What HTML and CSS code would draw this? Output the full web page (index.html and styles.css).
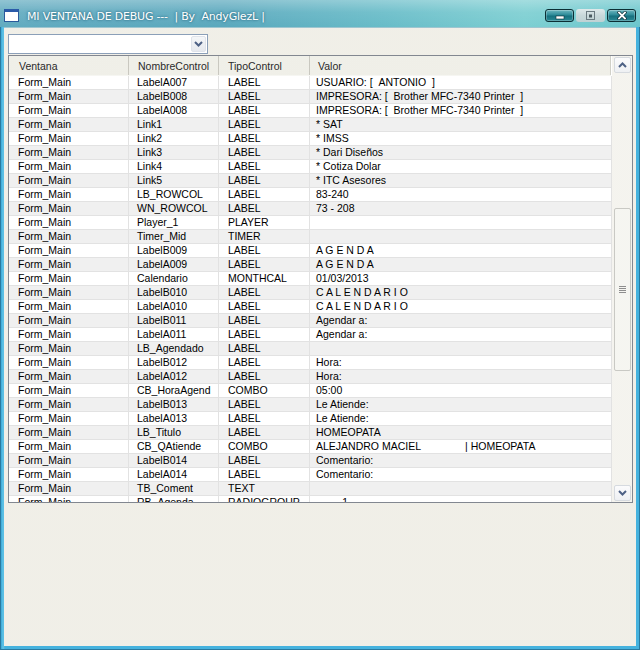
FILE: index.html
```html
<!DOCTYPE html>
<html>
<head>
<meta charset="utf-8">
<link rel="stylesheet" href="styles.css">
</head>
<body>
<div class="window">
  <div class="titlebar">
    <div class="appicon"></div>
    <div class="title">MI VENTANA DE DEBUG ---&nbsp;&nbsp;| By&nbsp;&nbsp;AndyGlezL |</div>
    <div class="tbtns">
      <div class="tbtn dark"><svg width="10" height="6" viewBox="0 0 10 6"><rect x="1" y="2" width="8" height="3" fill="#fff" stroke="#0b3038" stroke-width="0.6"/></svg></div>
      <div class="tbtn light"><svg width="9" height="9" viewBox="0 0 9 9"><rect x="0.5" y="0.5" width="8" height="8" fill="none" stroke="#6a7a80"/><rect x="3" y="3.5" width="3" height="3" fill="#4a5a60"/></svg></div>
      <div class="tbtn dark close"><svg width="10" height="9" viewBox="0 0 10 9"><path d="M2 1.5 L8 7.5 M8 1.5 L2 7.5" stroke="#0b3038" stroke-width="3.2" stroke-linecap="square"/><path d="M2 1.5 L8 7.5 M8 1.5 L2 7.5" stroke="#fff" stroke-width="1.8" stroke-linecap="square"/></svg></div>
    </div>
  </div>
  <div class="client">
    <div class="combo">
      <div class="combo-text"></div>
      <div class="combo-btn"><svg width="9" height="6" viewBox="0 0 9 6"><path d="M1 1 L4.5 4.5 L8 1" fill="none" stroke="#4d6185" stroke-width="2"/></svg></div>
    </div>
    <div class="listview">
      <div class="lv-main">
        <div class="lv-head">
          <div class="hc c1">Ventana</div>
          <div class="hc c2">NombreControl</div>
          <div class="hc c3">TipoControl</div>
          <div class="hc c4">Valor</div>
        </div>
        <div class="lv-body">
          <div class="row"><div>Form_Main</div><div>LabelA007</div><div>LABEL</div><div>USUARIO: [&nbsp;&nbsp;ANTONIO&nbsp;&nbsp;]</div></div>
          <div class="row"><div>Form_Main</div><div>LabelB008</div><div>LABEL</div><div>IMPRESORA: [&nbsp;&nbsp;Brother MFC-7340 Printer&nbsp;&nbsp;]</div></div>
          <div class="row"><div>Form_Main</div><div>LabelA008</div><div>LABEL</div><div>IMPRESORA: [&nbsp;&nbsp;Brother MFC-7340 Printer&nbsp;&nbsp;]</div></div>
          <div class="row"><div>Form_Main</div><div>Link1</div><div>LABEL</div><div>* SAT</div></div>
          <div class="row"><div>Form_Main</div><div>Link2</div><div>LABEL</div><div>* IMSS</div></div>
          <div class="row"><div>Form_Main</div><div>Link3</div><div>LABEL</div><div>* Dari Diseños</div></div>
          <div class="row"><div>Form_Main</div><div>Link4</div><div>LABEL</div><div>* Cotiza Dolar</div></div>
          <div class="row"><div>Form_Main</div><div>Link5</div><div>LABEL</div><div>* ITC Asesores</div></div>
          <div class="row"><div>Form_Main</div><div>LB_ROWCOL</div><div>LABEL</div><div>83-240</div></div>
          <div class="row"><div>Form_Main</div><div>WN_ROWCOL</div><div>LABEL</div><div>73 - 208</div></div>
          <div class="row"><div>Form_Main</div><div>Player_1</div><div>PLAYER</div><div></div></div>
          <div class="row"><div>Form_Main</div><div>Timer_Mid</div><div>TIMER</div><div></div></div>
          <div class="row"><div>Form_Main</div><div>LabelB009</div><div>LABEL</div><div>A G E N D A</div></div>
          <div class="row"><div>Form_Main</div><div>LabelA009</div><div>LABEL</div><div>A G E N D A</div></div>
          <div class="row"><div>Form_Main</div><div>Calendario</div><div>MONTHCAL</div><div>01/03/2013</div></div>
          <div class="row"><div>Form_Main</div><div>LabelB010</div><div>LABEL</div><div>C A L E N D A R I O</div></div>
          <div class="row"><div>Form_Main</div><div>LabelA010</div><div>LABEL</div><div>C A L E N D A R I O</div></div>
          <div class="row"><div>Form_Main</div><div>LabelB011</div><div>LABEL</div><div>Agendar a:</div></div>
          <div class="row"><div>Form_Main</div><div>LabelA011</div><div>LABEL</div><div>Agendar a:</div></div>
          <div class="row"><div>Form_Main</div><div>LB_Agendado</div><div>LABEL</div><div></div></div>
          <div class="row"><div>Form_Main</div><div>LabelB012</div><div>LABEL</div><div>Hora:</div></div>
          <div class="row"><div>Form_Main</div><div>LabelA012</div><div>LABEL</div><div>Hora:</div></div>
          <div class="row"><div>Form_Main</div><div>CB_HoraAgend</div><div>COMBO</div><div>05:00</div></div>
          <div class="row"><div>Form_Main</div><div>LabelB013</div><div>LABEL</div><div>Le Atiende:</div></div>
          <div class="row"><div>Form_Main</div><div>LabelA013</div><div>LABEL</div><div>Le Atiende:</div></div>
          <div class="row"><div>Form_Main</div><div>LB_Titulo</div><div>LABEL</div><div>HOMEOPATA</div></div>
          <div class="row"><div>Form_Main</div><div>CB_QAtiende</div><div>COMBO</div><div>ALEJANDRO MACIEL<span class="gap"></span>| HOMEOPATA</div></div>
          <div class="row"><div>Form_Main</div><div>LabelB014</div><div>LABEL</div><div>Comentario:</div></div>
          <div class="row"><div>Form_Main</div><div>LabelA014</div><div>LABEL</div><div>Comentario:</div></div>
          <div class="row"><div>Form_Main</div><div>TB_Coment</div><div>TEXT</div><div></div></div>
          <div class="row"><div>Form_Main</div><div>RB_Agenda</div><div>RADIOGROUP</div><div>&nbsp;&nbsp;&nbsp;&nbsp;&nbsp;&nbsp;&nbsp;&nbsp;&nbsp;1</div></div>
        </div>
      </div>
      <div class="vscroll">
        <div class="sbtn"><svg width="9" height="6" viewBox="0 0 9 6"><path d="M1 5 L4.5 1.5 L8 5" fill="none" stroke="#4d6185" stroke-width="2"/></svg></div>
        <div class="track">
          <div class="thumb"><span></span><span></span><span></span><span></span></div>
        </div>
        <div class="sbtn"><svg width="9" height="6" viewBox="0 0 9 6"><path d="M1 1 L4.5 4.5 L8 1" fill="none" stroke="#4d6185" stroke-width="2"/></svg></div>
      </div>
    </div>
  </div>
</div>
</body>
</html>
```

FILE: styles.css
```css
html, body {
  margin: 0;
  padding: 0;
  background: #ece9e0;
}
.window {
  width: 640px;
  height: 650px;
  box-sizing: border-box;
  display: flex;
  flex-direction: column;
  background: linear-gradient(to right, #3aa8d8 0, #62c4e6 2px, #45b2de 4px);
  border: 1px solid #2a7aa0;
  border-top: none;
}
.titlebar {
  height: 27px;
  flex: none;
  display: flex;
  align-items: center;
  background:
    linear-gradient(to bottom, rgba(255,255,255,0.3) 0, rgba(255,255,255,0.08) 45%, rgba(0,0,0,0) 100%),
    linear-gradient(to right, #62abc0 0%, #5aa8bd 35%, #68bcc8 60%, #7dcfd2 82%, #6cc6cc 100%);
  margin: 0 -1px;
  padding-left: 4px;
}
.appicon {
  width: 13px;
  height: 9px;
  margin-top: 4px;
  border: 1px solid #2a5a9a;
  border-top: 3px solid #2a5aa8;
  background: #fff;
  flex: none;
}
.title {
  margin-left: 8px;
  margin-top: 6px;
  font-family: "DejaVu Sans", sans-serif;
  font-size: 11px;
  letter-spacing: -0.2px;
  color: #fff;
  text-shadow: 0 0 2px #2f6f86, 0 0 3px #3f7f96;
  white-space: nowrap;
  flex: 1;
}
.tbtns {
  display: flex;
  gap: 2px;
  margin-right: 4px;
  margin-top: 2px;
  align-self: flex-start;
  padding-top: 7px;
}
.tbtn {
  width: 29px;
  height: 13px;
  box-sizing: border-box;
  border-radius: 3px;
  display: flex;
  align-items: center;
  justify-content: center;
}
.tbtn.dark {
  border: 1px solid #0c2e34;
  background: linear-gradient(to bottom, #6fb8c0 0, #2d8a98 45%, #17707e 55%, #2a8a96 100%);
  box-shadow: inset 0 0 0 1px rgba(255,255,255,0.25);
}
.tbtn.dark svg { margin-top: 2px; }
.tbtn.close svg { margin-top: 0; }
.tbtn.light {
  background: linear-gradient(to bottom, #dfe9ea 0, #c8d8da 50%, #bfd2d4 100%);
}
.client {
  flex: 1;
  background-color: #ebe9e1;
  background-image: radial-gradient(circle, #f6f5ee 0.6px, transparent 0.8px);
  background-size: 2px 2px;
  margin: 0 3px 3px 3px;
  padding: 6px 3px 0 4px;
  border-top: 1px solid #9ec6d0;
  display: flex;
  flex-direction: column;
}
.combo {
  width: 200px;
  height: 20px;
  box-sizing: border-box;
  border: 1px solid #8b9fb8;
  background: #fff;
  display: flex;
  justify-content: flex-end;
  padding: 1px;
}
.combo-btn {
  width: 15px;
  box-sizing: border-box;
  border: 1px solid #dfe3ea;
  border-radius: 2px;
  background: linear-gradient(to bottom, #f4f6f8, #e6e9ee);
  display: flex;
  align-items: center;
  justify-content: center;
}
.combo-text { flex: 1; }
.listview {
  margin-top: 1px;
  height: 448px;
  box-sizing: border-box;
  border: 1px solid #828790;
  background: #fff;
  display: flex;
}
.lv-main {
  flex: 1;
  display: flex;
  flex-direction: column;
  overflow: hidden;
}
.lv-head {
  height: 20px;
  flex: none;
  display: grid;
  grid-template-columns: 120px 90px 91px 1fr;
  background-color: #e9e8e1;
  background-image: radial-gradient(circle, #f7f6f0 0.6px, transparent 0.8px);
  background-size: 2px 2px;
  border-bottom: 1px solid #f6f6f2;
  box-sizing: border-box;
  margin-right: 1px;
}
.hc {
  font-family: "Liberation Sans", Arial, sans-serif;
  font-size: 10.5px;
  color: #2a2a2a;
  display: flex;
  align-items: center;
  border-right: 1px solid #c9c8c0;
  box-sizing: border-box;
  padding-left: 9px;
  padding-top: 1px;
}
.hc.c1 { padding-left: 10px; }
.hc.c2 { padding-left: 9px; }
.hc.c4 { border-right: 1px solid #d0d0c8; padding-left: 8px; }
.lv-body {
  flex: 1;
  overflow: hidden;
}
.row {
  height: 14px;
  display: grid;
  grid-template-columns: 120px 90px 91px 1fr;
  border-bottom: 1px solid #e2e2e2;
  box-sizing: border-box;
  font-family: "Liberation Sans", Arial, sans-serif;
  font-size: 10.5px;
  color: #000;
  line-height: 13px;
}
.row:nth-child(even) { background: #f0f0f0; }
.row > div {
  border-right: 1px solid #e2e2e2;
  padding-left: 9px;
  white-space: nowrap;
  overflow: hidden;
}
.row > div:nth-child(2) { padding-left: 8px; }
.row > div:nth-child(4) { padding-left: 6px; }
.gap { display: inline-block; width: 44px; }
.vscroll {
  width: 20px;
  flex: none;
  display: flex;
  flex-direction: column;
  padding: 1px 1px 1px 2px;
  box-sizing: border-box;
  background-color: #eeede6;
  background-image: radial-gradient(circle, #fbfbf7 0.6px, transparent 0.8px);
  background-size: 2px 2px;
}
.sbtn {
  height: 16px;
  flex: none;
  box-sizing: border-box;
  border: 1px solid #d6dadf;
  border-radius: 2px;
  background: linear-gradient(to bottom, #fbfbfc, #eef0f3);
  display: flex;
  align-items: center;
  justify-content: center;
}
.track {
  flex: 1;
  display: flex;
  flex-direction: column;
  padding-top: 135px;
}
.thumb {
  height: 163px;
  box-sizing: border-box;
  border: 1px solid #c9c9c4;
  border-radius: 2px;
  background-color: #f1f0ea;
  background-image: radial-gradient(circle, #fbfbf8 0.6px, transparent 0.8px);
  background-size: 2px 2px;
  display: flex;
  flex-direction: column;
  align-items: center;
  justify-content: center;
  gap: 1px;
}
.thumb span {
  width: 7px;
  height: 1px;
  background: #8e8e8e;
}
```
